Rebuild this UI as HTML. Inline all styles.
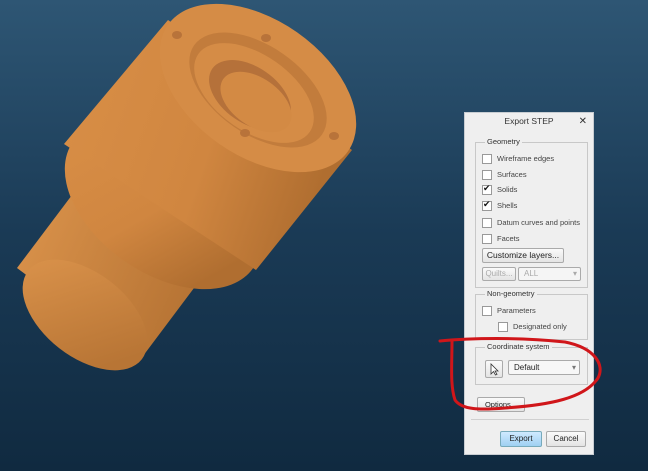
<!DOCTYPE html>
<html><head><meta charset="utf-8"><style>
body{margin:0;width:648px;height:471px;overflow:hidden;background:linear-gradient(#2e5674,#1a3a55 50%,#102a40);font-family:"Liberation Sans",sans-serif;}
.dlg{position:absolute;left:464px;top:112px;width:130px;height:343px;background:#efefef;border:1px solid #c8cdd2;box-sizing:border-box;font-size:8px;color:#333}
.ttl{position:absolute;left:0;top:0;width:100%;height:17px;text-align:center;line-height:17px;font-size:8.5px;color:#333}
.x{position:absolute;right:6px;top:0;font-size:10px}
.grp{position:absolute;border:1px solid #c8c8c8;box-sizing:border-box}
.gl{position:absolute;top:-6px;left:9px;background:#efefef;padding:0 2px;font-size:7.5px}
.row{position:absolute;left:6px;height:12px;line-height:11px;font-size:7.5px;color:#444;white-space:nowrap}
.cb{display:inline-block;width:8px;height:8px;border:1px solid #999;background:#fff;vertical-align:middle;margin-right:5px;position:relative}
.ck::after{content:"✔";position:absolute;left:0;top:-3px;font-size:9px;color:#111}
.btn{position:absolute;border:1px solid #aaa;background:linear-gradient(#fafafa,#e4e4e4);border-radius:2px;box-sizing:border-box;text-align:center;font-size:8px;color:#222;white-space:nowrap}
</style></head><body>
<svg width="648" height="471" style="position:absolute;left:0;top:0">
<defs>
<linearGradient id="bd" x1="0" y1="0" x2="1" y2="0.3"><stop offset="0" stop-color="#d98f47"/><stop offset="0.6" stop-color="#d08640"/><stop offset="1" stop-color="#b06e30"/></linearGradient>
<linearGradient id="sh" x1="0" y1="0" x2="1" y2="0.4"><stop offset="0" stop-color="#dc944c"/><stop offset="1" stop-color="#b87535"/></linearGradient>
</defs>
<polygon points="17,268 72,195 200,280 140,360" fill="url(#sh)"/>
<ellipse cx="85" cy="315" rx="72" ry="42" transform="rotate(38 85 315)" fill="url(#sh)"/>
<ellipse cx="163" cy="205" rx="110" ry="68" transform="rotate(35 163 205)" fill="url(#bd)"/>
<polygon points="168,20 352,150 256,270 64,144" fill="url(#bd)"/>
<ellipse cx="258" cy="88" rx="110" ry="68" transform="rotate(35 258 88)" fill="#d58c46"/>
<ellipse cx="258" cy="90" rx="78" ry="44" transform="rotate(35 258 90)" fill="#c27c3c"/>
<ellipse cx="254" cy="93" rx="68" ry="38" transform="rotate(35 254 93)" fill="#d58c46"/>
<ellipse cx="250" cy="95" rx="46" ry="28" transform="rotate(35 250 95)" fill="#b5713a"/>
<ellipse cx="256" cy="102" rx="40" ry="24" transform="rotate(35 256 102)" fill="#d38a44"/>
<ellipse cx="177" cy="35" rx="5" ry="4" fill="#b8733a"/>
<ellipse cx="266" cy="38" rx="5" ry="4" fill="#b8733a"/>
<ellipse cx="245" cy="133" rx="5" ry="4" fill="#b8733a"/>
<ellipse cx="334" cy="136" rx="5" ry="4" fill="#b8733a"/>
</svg>
<div class="dlg">
<div class="ttl">Export STEP<span class="x">✕</span></div>
<div class="grp" style="left:10px;top:29px;width:113px;height:146px"><span class="gl">Geometry</span>
<div class="row" style="top:10px"><span class="cb"></span>Wireframe edges</div>
<div class="row" style="top:26px"><span class="cb"></span>Surfaces</div>
<div class="row" style="top:41px"><span class="cb ck"></span>Solids</div>
<div class="row" style="top:57px"><span class="cb ck"></span>Shells</div>
<div class="row" style="top:74px"><span class="cb"></span>Datum curves and points</div>
<div class="row" style="top:90px"><span class="cb"></span>Facets</div>
<div class="btn" style="left:6px;top:105px;width:82px;height:15px;line-height:13px;font-size:8.5px">Customize layers...</div>
<div class="btn" style="left:6px;top:124px;width:34px;height:14px;line-height:12px;color:#aaa">Quilts...</div>
<div class="btn" style="left:42px;top:124px;width:63px;height:14px;line-height:12px;color:#aaa;text-align:left;padding-left:5px;background:#f5f5f5">ALL<span style="position:absolute;right:3px">▾</span></div>
</div>
<div class="grp" style="left:10px;top:181px;width:113px;height:46px"><span class="gl">Non-geometry</span>
<div class="row" style="top:10px"><span class="cb"></span>Parameters</div>
<div class="row" style="top:26px;left:22px"><span class="cb"></span>Designated only</div>
</div>
<div class="grp" style="left:10px;top:234px;width:113px;height:38px"><span class="gl">Coordinate system</span>
<div class="btn" style="left:9px;top:12px;width:18px;height:18px">
<svg width="16" height="16" style="position:absolute;left:0;top:0"><path d="M5,3 L5,13 L7.5,10.5 L9.5,14 L11,13.3 L9,10 L12,10 Z" fill="#fff" stroke="#333" stroke-width="0.8"/></svg></div>
<div class="btn" style="left:32px;top:12px;width:72px;height:15px;line-height:13px;text-align:left;padding-left:5px;background:#f7f7f7">Default<span style="position:absolute;right:3px;color:#777">▾</span></div>
</div>
<div class="btn" style="left:12px;top:284px;width:48px;height:15px;line-height:13px;font-size:7.5px">Options...</div>
<div style="position:absolute;left:6px;top:306px;width:118px;border-top:1px solid #d0d0d0"></div>
<div class="btn" style="left:35px;top:318px;width:42px;height:16px;line-height:14px;background:linear-gradient(#cfeaff,#9fd0f2);border-color:#7ab">Export</div>
<div class="btn" style="left:81px;top:318px;width:40px;height:16px;line-height:14px">Cancel</div>
</div>
<svg width="648" height="471" style="position:absolute;left:0;top:0" fill="none">
<path d="M440,341 C470,338 520,337 565,342 C595,348 605,365 598,378 C585,398 550,405 505,408 C480,410 462,410 455,400 C450,385 452,365 452,340" stroke="#d0161a" stroke-width="3" stroke-linecap="round"/>
</svg>
</body></html>
